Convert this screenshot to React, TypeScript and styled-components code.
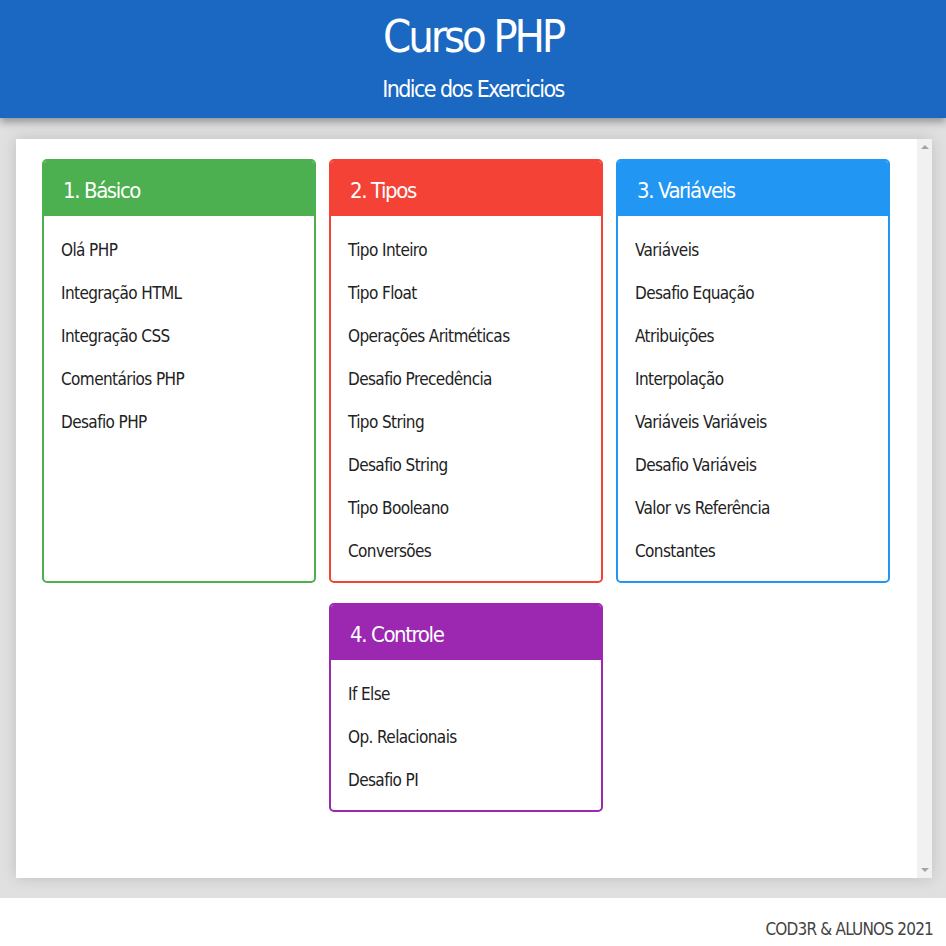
import React from 'react'
import styled, { createGlobalStyle } from 'styled-components'

const font = `"Liberation Sans Narrow", "DejaVu Sans Condensed", "Roboto Condensed", "Liberation Sans", sans-serif`

const GlobalStyle = createGlobalStyle`
    html, body {
        margin: 0;
        padding: 0;
        height: 100%;
    }
    body {
        font-family: ${font};
        font-stretch: condensed;
        background: #e0e0e0;
    }
    #root {
        height: 100%;
    }
`

interface Section {
    title: string
    color: string
    items: string[]
}

const sections: Section[] = [
    {
        title: '1. Básico',
        color: '#4caf50',
        items: ['Olá PHP', 'Integração HTML', 'Integração CSS', 'Comentários PHP', 'Desafio PHP']
    },
    {
        title: '2. Tipos',
        color: '#f44336',
        items: [
            'Tipo Inteiro',
            'Tipo Float',
            'Operações Aritméticas',
            'Desafio Precedência',
            'Tipo String',
            'Desafio String',
            'Tipo Booleano',
            'Conversões'
        ]
    },
    {
        title: '3. Variáveis',
        color: '#2196f3',
        items: [
            'Variáveis',
            'Desafio Equação',
            'Atribuições',
            'Interpolação',
            'Variáveis Variáveis',
            'Desafio Variáveis',
            'Valor vs Referência',
            'Constantes'
        ]
    },
    {
        title: '4. Controle',
        color: '#9c27b0',
        items: ['If Else', 'Op. Relacionais', 'Desafio PI']
    }
]

export default function App() {
    return (
        <Page>
            <GlobalStyle />
            <Header>
                <Title>Curso PHP</Title>
                <Subtitle>Indice dos Exercicios</Subtitle>
            </Header>
            <Main>
                <Content>
                    <Modules>
                        {sections.map(s => (
                            <Module key={s.title} color={s.color}>
                                <ModuleTitle color={s.color}>{s.title}</ModuleTitle>
                                <Exercises>
                                    {s.items.map(i => (
                                        <Exercise key={i}>{i}</Exercise>
                                    ))}
                                </Exercises>
                            </Module>
                        ))}
                    </Modules>
                    <ScrollTrack>
                        <Arrow up />
                        <Arrow />
                    </ScrollTrack>
                </Content>
            </Main>
            <Footer>COD3R &amp; ALUNOS 2021</Footer>
        </Page>
    )
}

const Page = styled.div`
    height: 100%;
    display: grid;
    grid-template-rows: 118px 1fr 48px;
`

const Header = styled.header`
    background: #1a68c2;
    color: #fff;
    display: flex;
    flex-direction: column;
    align-items: center;
    box-shadow: 0 4px 8px rgba(0, 0, 0, 0.35);
    z-index: 1;
`

const Title = styled.h1`
    margin: 9px 0 0;
    font-size: 45px;
    font-weight: 300;
    line-height: 56px;
    letter-spacing: -3.2px;
`

const Subtitle = styled.h2`
    margin: 9px 0 0;
    font-size: 23px;
    font-weight: 300;
    line-height: 30px;
    letter-spacing: -1.6px;
`

const Main = styled.main`
    display: flex;
    padding: 21px 14px 20px 16px;
    min-height: 0;
`

const Content = styled.div`
    flex: 1;
    display: flex;
    background: #fff;
    box-shadow: 0 0 14px rgba(0, 0, 0, 0.15);
`

const ScrollTrack = styled.div`
    width: 15px;
    flex-shrink: 0;
    background: #f1f1f1;
    display: flex;
    flex-direction: column;
    justify-content: space-between;
    align-items: center;
    padding: 6px 0;
`

const Arrow = styled.div<{ up?: boolean }>`
    width: 0;
    height: 0;
    border-left: 4px solid transparent;
    border-right: 4px solid transparent;
    ${p => (p.up ? 'border-bottom' : 'border-top')}: 4px solid #a3a3a3;
`

const Modules = styled.div`
    flex: 1;
    overflow: auto;
    display: flex;
    flex-wrap: wrap;
    justify-content: center;
    align-content: flex-start;
    column-gap: 13px;
    row-gap: 20px;
    padding: 20px 1px 20px 0;
`

const Module = styled.div<{ color: string }>`
    width: 274px;
    box-sizing: border-box;
    border: 2px solid ${p => p.color};
    border-radius: 5px;
    overflow: hidden;
    display: flex;
    flex-direction: column;
`

const ModuleTitle = styled.div<{ color: string }>`
    background: ${p => p.color};
    color: #fff;
    height: 57px;
    box-sizing: border-box;
    margin: -2px -2px 0;
    padding: 5px 21px 0;
    display: flex;
    align-items: center;
    font-size: 22px;
    font-weight: 300;
    letter-spacing: -1.4px;
`

const Exercises = styled.div`
    padding: 12px 17px 9px;
`

const Exercise = styled.div`
    height: 43px;
    display: flex;
    align-items: center;
    font-size: 17px;
    letter-spacing: -0.6px;
    color: #222;
`

const Footer = styled.footer`
    background: #fff;
    display: flex;
    align-items: center;
    justify-content: flex-end;
    padding: 14px 13px 0 0;
    font-size: 17px;
    letter-spacing: -0.8px;
    color: #444;
`
